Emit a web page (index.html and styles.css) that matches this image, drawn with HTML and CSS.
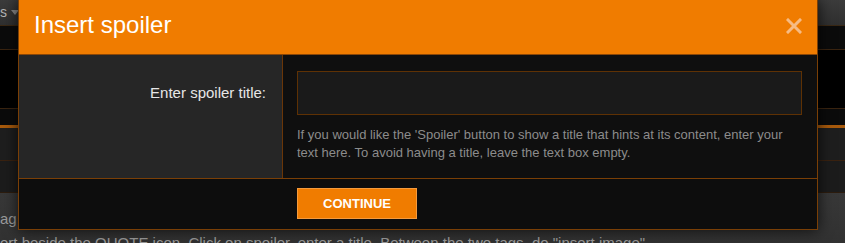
FILE: index.html
```html
<!DOCTYPE html>
<html lang="en">
<head>
<meta charset="utf-8">
<title>Insert spoiler</title>
<link rel="stylesheet" href="styles.css">
</head>
<body>
<div class="page">
  <div class="topbar"><span class="crumb">s</span><span class="caret"></span></div>
  <div class="band band-dark"></div>
  <div class="band band-black"></div>
  <div class="band band-thin"></div>
  <div class="accent"></div>
  <div class="band band-gray1"></div>
  <div class="band band-gray2"></div>
  <div class="post">
    <p class="post-line">ag</p>
    <p class="post-line">ert beside the QUOTE icon. Click on spoiler, enter a title. Between the two tags, do "insert image".</p>
  </div>
</div>

<div class="dialog">
  <div class="dlg-head">
    <h2 class="dlg-title">Insert spoiler</h2>
    <span class="dlg-close" aria-label="Close">
      <svg width="16" height="16" viewBox="0 0 16 16"><path d="M2 2 L14 14 M14 2 L2 14" stroke="#f6bb84" stroke-width="3" stroke-linecap="square" fill="none"/></svg>
    </span>
  </div>
  <div class="dlg-row">
    <div class="label-cell"><label class="field-label" for="title">Enter spoiler title:</label></div>
    <div class="input-cell">
      <input class="text-input" id="title" type="text">
      <p class="hint">If you would like the 'Spoiler' button to show a title that hints at its content, enter your text here. To avoid having a title, leave the text box empty.</p>
    </div>
  </div>
  <div class="dlg-foot">
    <button class="btn-continue" type="button">CONTINUE</button>
  </div>
</div>
</body>
</html>
```

FILE: styles.css
```css
html, body {
  margin: 0;
  padding: 0;
  background: #000;
  font-family: "Liberation Sans", Arial, sans-serif;
  overflow: hidden;
}

.page {
  width: 845px;
  height: 243px;
  overflow: hidden;
  display: flex;
  flex-direction: column;
}

.page > * { flex: none; }

.topbar {
  height: 25px;
  border-bottom: 1px solid #3a2814;
  background: linear-gradient(#3c3c3c, #2f2f2f);
  display: flex;
  align-items: center;
  gap: 4px;
  color: #b5b5b5;
  font-size: 14px;
}

.crumb { margin-top: -2px; }

.caret {
  width: 0;
  height: 0;
  border-left: 4px solid transparent;
  border-right: 4px solid transparent;
  border-top: 5px solid #8a8a8a;
}

.band-dark { height: 23px; background: #0b0b0b; border-bottom: 1px solid #3a2410; }
.band-black { height: 58px; background: #000; border-bottom: 1px solid #3a2410; }
.band-thin { height: 16px; background: #0b0b0b; }
.accent { height: 3px; background: #a85a0c; }
.band-gray1 { height: 32px; background: #1e1e1e; border-bottom: 1px solid #3a2210; }
.band-gray2 { height: 31px; background: #1c1c1c; border-bottom: 1px solid #2c1c0e; }

.post {
  height: 60px;
  background: linear-gradient(#383838, #2e2e2e);
  padding-top: 14px;
  color: #9c9c9c;
  font-size: 15px;
  line-height: 24px;
  white-space: nowrap;
}

.post-line { margin: 0; }

.dialog {
  position: absolute;
  left: 18px;
  top: -1px;
  width: 798px;
  border: 1px solid #7a3f06;
  background: #0d0d0d;
  box-shadow: 0 0 14px rgba(0, 0, 0, 0.75);
}

.dlg-head {
  height: 41px;
  padding: 13px 15px 0 15px;
  background: #f07c00;
  border-bottom: 1px solid #8a4708;
  display: flex;
  align-items: flex-start;
}

.dlg-title {
  margin: 0;
  font-size: 24px;
  line-height: 24px;
  font-weight: normal;
  color: #fff;
}

.dlg-close {
  margin-left: auto;
  margin-top: 5px;
  width: 16px;
  height: 16px;
  display: block;
}

.dlg-close svg { display: block; }

.dlg-row {
  display: flex;
  border-bottom: 1px solid #7a3f06;
}

.label-cell {
  width: 247px;
  flex: none;
  background: #262626;
  border-right: 1px solid #6a3608;
  padding: 29px 16px 0 0;
  text-align: right;
}

.field-label {
  display: block;
  font-size: 15px;
  line-height: 18px;
  color: #e6e6e6;
}

.input-cell {
  flex: 1;
  background: #0f0f0f;
  padding: 16px 15px 16px 14px;
}

.text-input {
  display: block;
  box-sizing: border-box;
  width: 100%;
  height: 44px;
  margin: 0;
  border: 1px solid #5e3104;
  background: #1a1a1a;
  color: #ddd;
  font: inherit;
  outline: none;
}

.hint {
  margin: 11px 0 0;
  font-size: 13px;
  line-height: 18px;
  color: #8c8c8c;
}

.dlg-foot {
  height: 31px;
  padding: 9px 14px 10px 278px;
  background: #0d0d0d;
}

.btn-continue {
  display: block;
  box-sizing: border-box;
  width: 120px;
  height: 31px;
  margin: 0;
  border: 1px solid #f59a3c;
  background: #f07c00;
  color: #fff;
  font-family: "Liberation Sans", Arial, sans-serif;
  font-size: 13px;
  font-weight: bold;
  padding: 0;
}
```
